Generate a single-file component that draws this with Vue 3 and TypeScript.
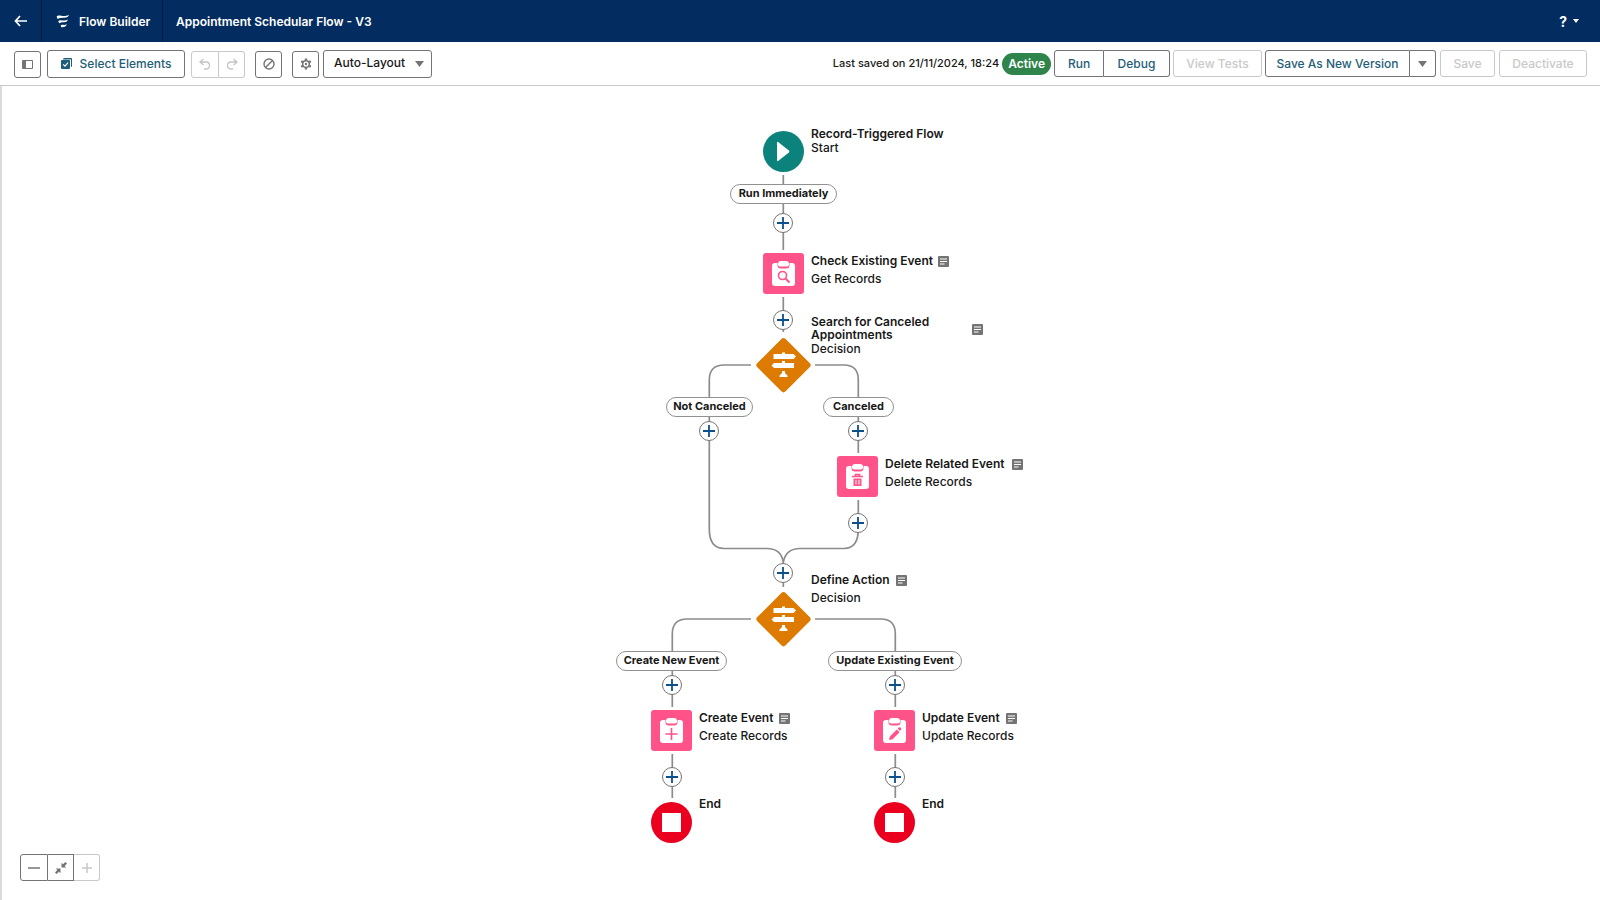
<script setup lang="ts">
import { ref } from 'vue'

type Kind = 'start' | 'get' | 'delete' | 'create' | 'update' | 'decision' | 'end'

interface FlowNode {
  id: string
  kind: Kind
  x: number
  y: number
  textX: number
  textY: number
  title: string
  subtitle?: string
  titleWidth: number
  note?: boolean
  tight?: boolean
}

interface Pill {
  text: string
  x: number
  y: number
  width: number
}

const layout = ref('Auto-Layout')

// x / y are the top left corner of each 41px icon
const nodes: FlowNode[] = [
  { id: 'start', kind: 'start', x: 163, y: 45, textX: 211, textY: 41, title: 'Record-Triggered Flow', subtitle: 'Start', titleWidth: 150, tight: true },
  { id: 'check', kind: 'get', x: 163, y: 167, textX: 211, textY: 168, title: 'Check Existing Event', subtitle: 'Get Records', titleWidth: 122, note: true },
  { id: 'search', kind: 'decision', x: 163, y: 258, textX: 211, textY: 229, title: 'Search for Canceled Appointments', subtitle: 'Decision', titleWidth: 156, note: true, tight: true },
  { id: 'remove', kind: 'delete', x: 237, y: 370, textX: 285, textY: 371, title: 'Delete Related Event', subtitle: 'Delete Records', titleWidth: 122, note: true },
  { id: 'define', kind: 'decision', x: 163, y: 512, textX: 211, textY: 487, title: 'Define Action', subtitle: 'Decision', titleWidth: 80, note: true },
  { id: 'create', kind: 'create', x: 51, y: 624, textX: 99, textY: 625, title: 'Create Event', subtitle: 'Create Records', titleWidth: 75, note: true },
  { id: 'update', kind: 'update', x: 274, y: 624, textX: 322, textY: 625, title: 'Update Event', subtitle: 'Update Records', titleWidth: 79, note: true },
  { id: 'endLeft', kind: 'end', x: 51, y: 716, textX: 99, textY: 711, title: 'End', titleWidth: 40 },
  { id: 'endRight', kind: 'end', x: 274, y: 716, textX: 322, textY: 711, title: 'End', titleWidth: 40 },
]

const pills: Pill[] = [
  { text: 'Run Immediately', x: 130, y: 98, width: 107 },
  { text: 'Not Canceled', x: 66, y: 311, width: 87 },
  { text: 'Canceled', x: 223, y: 311, width: 71 },
  { text: 'Create New Event', x: 16, y: 565, width: 111 },
  { text: 'Update Existing Event', x: 228, y: 565, width: 134 },
]

const adds = [
  { x: 173, y: 127 },
  { x: 173, y: 224 },
  { x: 99, y: 335 },
  { x: 248, y: 335 },
  { x: 248, y: 427 },
  { x: 173, y: 477 },
  { x: 62, y: 589 },
  { x: 285, y: 589 },
  { x: 62, y: 681 },
  { x: 285, y: 681 },
]

const wires = [
  'M183.300 89V164', 'M183.300 211V246',
  'M151 279H124Q109.300 279 109.300 294V443Q109.300 462.500 124 462.500H167Q181 462.500 183.300 476',
  'M215 279H244Q258.300 279 258.300 294V367',
  'M258.300 414V443Q258.300 462.500 244 462.500H200Q186 462.500 183.300 476V501',
  'M151 533H87Q72.300 533 72.300 548V621', 'M215 533H281Q295.300 533 295.300 548V621',
  'M72.300 668V712', 'M295.300 668V712',
]
</script>

<template>
  <div class="app">
    <header class="header">
      <button class="back" aria-label="Back">
        <svg width="14" height="12" viewBox="0 0 14 12"><path d="M6 1 1.500 6 6 11M1.500 6H13" fill="none" stroke="#fff" stroke-width="1.700" /></svg>
      </button>
      <div class="brand">
        <svg width="14" height="14" viewBox="0 0 14 14" fill="#fff"><path d="M.6 2.600C3.500-.4 6.500 4.200 13 .8 11.500 5.800 5.500 2.400 1.600 5zM2.200 7C5 4.800 7 8.200 12 5.500 10.500 10 6.500 7 3.200 9.300zM4.600 11.400C6.500 9.800 7.700 12 10.800 10.300 9.800 13.800 7.500 12.400 5.600 13.600z" /></svg>
        <span>Flow Builder</span>
      </div>
      <h1>Appointment Schedular Flow - V3</h1>
      <button class="help" aria-label="Help">
        <span>?</span>
        <svg width="6" height="4" viewBox="0 0 6 4"><path d="M0 0h6L3 4z" fill="#fff" /></svg>
      </button>
    </header>

    <div class="toolbar">
      <div class="left">
        <button class="btn icon" aria-label="Toggle panel">
          <svg width="11" height="9" viewBox="0 0 11 9"><path d="M.5.5h10v8H.5z" fill="none" stroke="#747474" /><path d="M1 1h3v7H1z" fill="#747474" /></svg>
        </button>
        <button class="btn select-elements">
          <svg width="11" height="11" viewBox="0 0 11 11"><path d="M3 0h7q1 0 1 1v7q0 1-1 1V1.500H2Q2 0 3 0z" fill="#1f5e78" /><rect y="2" width="9" height="9" rx="1" fill="#1f5e78" /><path d="m2.200 6.300 1.800 1.900 3-3.500" fill="none" stroke="#fff" stroke-width="1.200" /></svg>
          <span>Select Elements</span>
        </button>
        <div class="group">
          <button class="btn icon" disabled aria-label="Undo">
            <svg width="12" height="12" viewBox="0 0 12 12"><path d="M4.500 1 1 4l3.500 3M1.500 4H7q3.500 0 3.500 3.500T7 11H5" fill="none" stroke="#c4c4c4" stroke-width="1.300" /></svg>
          </button>
          <button class="btn icon" disabled aria-label="Redo">
            <svg width="12" height="12" viewBox="0 0 12 12"><path d="M7.500 1 11 4 7.500 7M10.500 4H5Q1.500 4 1.500 7.500T5 11h2" fill="none" stroke="#c4c4c4" stroke-width="1.300" /></svg>
          </button>
        </div>
        <button class="btn icon ban" aria-label="Show issues">
          <svg width="12" height="12" viewBox="0 0 12 12"><path d="M2.500 9.500 9.500 2.500" stroke="#747474" stroke-width="1.500" /><circle cx="6" cy="6" r="5" fill="none" stroke="#747474" stroke-width="1.400" /></svg>
        </button>
        <button class="btn icon gear" aria-label="Settings">
          <svg width="12" height="12" viewBox="0 0 12 12" fill="none" stroke="#747474"><circle cx="6" cy="6" r="3.300" stroke-width="1.500" /><path d="M6 .5v2M6 9.500v2M1.200 3.200l1.800 1M9 7.800l1.800 1M1.200 8.800 3 7.800M9 4.200l1.800-1" stroke-width="2.400" /><circle cx="6" cy="6" r="1.200" fill="#747474" stroke="none" /></svg>
        </button>
        <div class="layout-wrap">
          <select v-model="layout" aria-label="Layout mode">
            <option>Auto-Layout</option>
            <option>Free-Form</option>
          </select>
          <svg width="9" height="6" viewBox="0 0 9 6"><path d="M0 0h9L4.500 6z" fill="#747474" /></svg>
        </div>
      </div>
      <div class="right">
        <span class="saved">Last saved on 21/11/2024, 18:24</span>
        <span class="badge">Active</span>
        <div class="group">
          <button class="btn run">Run</button>
          <button class="btn debug">Debug</button>
        </div>
        <button class="btn tests" disabled>View Tests</button>
        <div class="group">
          <button class="btn save-as">Save As New Version</button>
          <button class="btn icon" aria-label="More save options">
            <svg width="9" height="6" viewBox="0 0 9 6"><path d="M0 0h9L4.500 6z" fill="#747474" /></svg>
          </button>
        </div>
        <button class="btn save" disabled>Save</button>
        <button class="btn deactivate" disabled>Deactivate</button>
      </div>
    </div>

    <main class="canvas">
      <div class="stage">
        <svg class="wires" width="440" height="770" viewBox="0 0 440 770">
          <path v-for="wire in wires" :key="wire" :d="wire" />
        </svg>

        <template v-for="node in nodes" :key="node.id">
          <div class="node" :style="{ left: node.x + 'px', top: node.y + 'px' }">
            <svg v-if="node.kind === 'start'" width="41" height="41" viewBox="0 0 41 41">
              <circle cx="20.500" cy="20.500" r="20.500" fill="#0b827c" />
              <path d="M14 12q0-1.800 1.400-.8l10.500 8.400q1 .9 0 1.800l-10.500 8.400q-1.400 1-1.400-.8z" fill="#fff" />
            </svg>
            <svg v-else-if="node.kind === 'end'" width="41" height="41" viewBox="0 0 41 41">
              <circle cx="20.500" cy="20.500" r="20.500" fill="#ea001e" />
              <path d="M11 11h19v19H11z" fill="#fff" />
            </svg>
            <svg v-else-if="node.kind === 'decision'" class="diamond" width="41" height="41" viewBox="0 0 41 41">
              <rect x="1" y="1" width="40" height="40" rx="3" transform="rotate(45 20.500 20.500)" fill="#dd7a01" />
              <path d="M10.500 10H19V8.500h3V10h8.500l2.500 2.500-2.500 2.500h-20zM31 19v5H11l-2.500-2.500L11 19h8v-2h3v2zM19 27h3v2l2.500 2.500V33h-8v-1.500L19 29z" fill="#fff" />
            </svg>
            <svg v-else width="41" height="41" viewBox="0 0 41 41">
              <rect width="41" height="41" rx="3" fill="#ff538a" />
              <path d="M12 10h2.500v2q0 3.500 3.500 3.500h5q3.500 0 3.500-3.500v-2H29q3 0 3 3v17q0 3-3 3H12q-3 0-3-3V13q0-3 3-3z" fill="#fff" />
              <path d="M18 8h5q3 0 3 3v.5q0 2-2 2h-7q-2 0-2-2V11q0-3 3-3z" fill="#fff" />
              <g fill="none" stroke="#ff538a" stroke-width="1.600">
                <path v-if="node.kind === 'create'" d="M20.500 18v12M14.500 24h12" />
                <template v-else-if="node.kind === 'get'">
                  <circle cx="19.500" cy="22.500" r="4" />
                  <path d="m22.500 25.500 4 4" stroke-width="2" />
                </template>
                <template v-else-if="node.kind === 'delete'">
                  <path d="M15 20.500h11M18.500 20v-1.500h4V20" />
                  <path d="M16.500 22.500h8V30h-8z" fill="#ff538a" stroke="none" />
                  <path d="M19 24v4.500M22 24v4.500" stroke="#fff" stroke-width="1" />
                </template>
                <path v-else d="m15 30 .8-3.600 7-7 2.800 2.800-7 7zM23.700 18.500l1-1q1.400-.8 2.300.500.900 1.200-.500 2.300l-.7.700z" fill="#ff538a" stroke="none" />
              </g>
            </svg>
          </div>

          <div class="caption" :class="{ tight: node.tight }" :style="{ left: node.textX + 'px', top: node.textY + 'px' }">
            <div class="title-row">
              <strong :style="{ width: node.titleWidth + 'px' }">{{ node.title }}</strong>
              <svg v-if="node.note" class="note" width="11" height="11" viewBox="0 0 11 11"><rect width="11" height="11" rx="1" fill="#747474" /><path d="M2 3h7M2 5.500h7M2 8h4.500" stroke="#fff" stroke-width="1.200" /></svg>
            </div>
            <span v-if="node.subtitle">{{ node.subtitle }}</span>
          </div>
        </template>

        <div v-for="pill in pills" :key="pill.text" class="pill" :style="{ left: pill.x + 'px', top: pill.y + 'px', width: pill.width + 'px' }">{{ pill.text }}</div>

        <button v-for="(add, i) in adds" :key="i" class="add" aria-label="Add element" :style="{ left: add.x + 'px', top: add.y + 'px' }">
          <svg width="14" height="14" viewBox="0 0 14 14"><path d="M7 1v12M1 7h12" stroke="#0b4f8c" stroke-width="1.800" /></svg>
        </button>
      </div>

      <div class="zoom group">
        <button class="btn icon" aria-label="Zoom out"><svg width="12" height="12" viewBox="0 0 12 12"><path d="M0 6h12" stroke="#747474" stroke-width="1.500" /></svg></button>
        <button class="btn icon" aria-label="Zoom to fit"><svg width="12" height="12" viewBox="0 0 12 12"><path d="M6.500.8v4.700h4.700L9.700 4 12 1.500 10.500 0 8 2.300zM.8 6.500h4.700v4.700L4 9.700 1.500 12 0 10.500 2.300 8z" fill="#747474" /></svg></button>
        <button class="btn icon" disabled aria-label="Zoom in"><svg width="12" height="12" viewBox="0 0 12 12"><path d="M1 6h10M6 1v10" stroke="#c9c9c9" stroke-width="1.500" /></svg></button>
      </div>
    </main>
  </div>
</template>

<style>
body {
  margin: 0;
}
</style>

<style scoped>
.app {
  display: flex;
  flex-direction: column;
  min-height: 100vh;
  background: #fff;
  color: #181818;
  font: 500 12px/13px Inter, "Open Sans", sans-serif;
}
* {
  box-sizing: border-box;
}
svg {
  display: block;
  flex: none;
}
button {
  font: inherit;
  padding: 0;
  cursor: pointer;
}
.header {
  display: flex;
  align-items: stretch;
  height: 42px;
  background: #032d60;
  color: #fff;
  font-weight: 600;
}
.back {
  display: flex;
  align-items: center;
  justify-content: center;
  width: 42px;
  border: 0;
  border-right: 1px solid #021c40;
  background: none;
}
.brand {
  display: flex;
  align-items: center;
  gap: 9px;
  width: 121px;
  padding-left: 14px;
  border-right: 1px solid #021c40;
  white-space: nowrap;
}
h1 {
  margin: 0;
  padding-left: 13px;
  align-self: center;
  font: inherit;
}
.help {
  display: flex;
  align-items: center;
  gap: 6px;
  margin-left: auto;
  padding-right: 21px;
  border: 0;
  background: none;
  color: #fff;
  font-size: 14px;
  font-weight: 700;
}
.toolbar {
  display: flex;
  align-items: center;
  justify-content: space-between;
  height: 44px;
  padding: 0 13px 0 14px;
  border-bottom: 1px solid #c9c9c9;
}
.left,
.right {
  display: flex;
  align-items: center;
}
.left {
  gap: 6px;
  align-items: flex-end;
}
.right {
  gap: 3px;
}
.btn {
  display: flex;
  align-items: center;
  justify-content: center;
  height: 27px;
  border: 1px solid #747474;
  border-radius: 3px;
  background: #fff;
  color: #1f5e78;
  white-space: nowrap;
}
.btn:disabled {
  border-color: #c9c9c9;
  color: #c9c9c9;
  cursor: default;
}
.icon {
  width: 27px;
}
.group {
  display: flex;
}
.group .btn + .btn {
  border-left-width: 0;
  border-radius: 0 3px 3px 0;
}
.group .btn:first-child {
  border-radius: 3px 0 0 3px;
}
.group .icon:first-child {
  width: 28px;
}
.group .icon:nth-child(n + 2) {
  width: 26px;
}
.group .btn:nth-child(2):not(:last-child) {
  border-radius: 0;
}
.select-elements {
  gap: 8px;
  width: 138px;
  height: 28px;
  padding-bottom: 1px;
}
.ban {
  margin: 0 4px;
}
.layout-wrap {
  position: relative;
  margin-left: -2px;
}
.layout-wrap svg {
  position: absolute;
  right: 8px;
  top: 11px;
  pointer-events: none;
}
select {
  display: block;
  appearance: none;
  width: 109px;
  height: 28px;
  padding: 0 20px 2px 10px;
  border: 1px solid #747474;
  border-radius: 3px;
  background: #fff;
  color: #181818;
  font: inherit;
}
.saved {
  font-size: 11px;
}
.badge {
  padding: 4px 6px 5px;
  border-radius: 11px;
  background: #2e844a;
  color: #fff;
  font-weight: 600;
}
.run {
  width: 50px;
}
.debug {
  width: 66px;
}
.tests {
  width: 89px;
}
.save-as {
  width: 145px;
}
.save {
  width: 55px;
  margin: 0 1px;
}
.deactivate {
  width: 88px;
}
.canvas {
  position: relative;
  flex: 1;
  padding-left: 38px;
  border-left: 2px solid #dddbda;
}
.stage {
  position: relative;
  width: 440px;
  height: 770px;
  margin: 0 auto;
}
.wires {
  fill: none;
  stroke: #8c8c8c;
  stroke-width: 1.700;
}
.node,
.caption,
.pill,
.add {
  position: absolute;
}
.diamond {
  overflow: visible;
}
.node:not(:has(.diamond)) {
  outline: 3px solid #fff;
}
.caption {
  display: flex;
  flex-direction: column;
  gap: 5px;
  white-space: nowrap;
}
.caption.tight {
  gap: 1px;
}
.title-row {
  display: flex;
  align-items: center;
  gap: 5px;
}
.title-row strong {
  font-weight: 600;
  white-space: normal;
}
.note {
  margin-top: 2px;
}
.pill {
  height: 20px;
  border: 1px solid #919191;
  border-radius: 10px;
  background: #fff;
  font-size: 11px;
  font-weight: 700;
  line-height: 17px;
  text-align: center;
  white-space: nowrap;
}
.add {
  display: flex;
  align-items: center;
  justify-content: center;
  width: 20px;
  height: 20px;
  border: 1px solid #747474;
  border-radius: 50%;
  background: #fff;
}
.zoom {
  position: absolute;
  left: 18px;
  bottom: 19px;
}
</style>
